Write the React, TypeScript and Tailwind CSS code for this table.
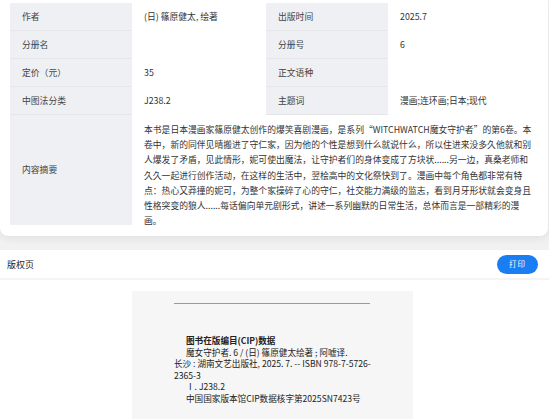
import React from "react";

const rows: [string, string, string, string][] = [
  ["作者", "(日) 篠原健太, 绘著", "出版时间", "2025.7"],
  ["分册名", "", "分册号", "6"],
  ["定价（元）", "35", "正文语种", ""],
  ["中图法分类", "J238.2", "主题词", "漫画;连环画;日本;现代"],
];

const summary = [
  "本书是日本漫画家篠原健太创作的爆笑喜剧漫画，是系列“WITCHWATCH魔女守护者”的第6卷。本",
  "卷中，新的同伴见晴搬进了守仁家，因为他的个性是想到什么就说什么，所以住进来没多久他就和别",
  "人爆发了矛盾，见此情形，妮可使出魔法，让守护者们的身体变成了方块状......另一边，真桑老师和",
  "久久一起进行创作活动，在这样的生活中，翌桧高中的文化祭快到了。漫画中每个角色都非常有特",
  "点：热心又莽撞的妮可，为整个家操碎了心的守仁，社交能力满级的监志，看到月牙形状就会变身且",
  "性格突变的狼人......每话偏向单元剧形式，讲述一系列幽默的日常生活，总体而言是一部精彩的漫",
  "画。",
];

export default function App() {
  return (
    <div className="w-[549px] h-[419px] overflow-hidden bg-[#f1f1f1] font-['Noto_Sans_CJK_SC','Noto_Sans',sans-serif]">
      <div className="w-[548px] bg-white rounded-b-lg shadow-[0_2px_8px_rgba(0,0,0,0.08)] px-[10px] pt-[3px] pb-[11px]">
        <div className="grid grid-cols-[122px_134px_122px_1fr] text-[8.8px]">
          {rows.map((r, i) => (
            <React.Fragment key={i}>
              <div className="h-[28px] flex items-center px-[12px] bg-[#eff0f3] border-b border-[#e4e6ea] text-[#444]">{r[0]}</div>
              <div className="h-[28px] flex items-center px-[12px] bg-white border-b border-white text-[#333]">{r[1]}</div>
              <div className="h-[28px] flex items-center px-[12px] bg-[#eff0f3] border-b border-[#e4e6ea] text-[#444]">{r[2]}</div>
              <div className="h-[28px] flex items-center px-[12px] bg-white border-b border-white text-[#333]">{r[3]}</div>
            </React.Fragment>
          ))}
          <div className="h-[110px] flex items-center px-[12px] bg-[#eff0f3] text-[#444]">内容摘要</div>
          <div className="col-span-3 h-[110px] px-[12px] pt-[7px] text-[#333] text-[8.8px] leading-[15.2px]">
            {summary.map((l, i) => (
              <div key={i} className="whitespace-nowrap">{l}</div>
            ))}
          </div>
        </div>
      </div>
      <div className="mt-[14px] bg-white">
        <div className="h-[30px] flex items-center justify-between pl-[7px] pr-[11px] border-b-2 border-[#f4f4f4]">
          <span className="text-[9px] text-[#222] pt-[2px]">版权页</span>
          <button className="w-[41px] h-[19px] rounded-full bg-[#1a7ef2] text-white text-[7.5px] tracking-[1px] flex items-center justify-center">打印</button>
        </div>
        <div className="pt-[11px] pl-[132px] h-[140px]">
          <div className="w-[281px] h-[130px] bg-[#f6f6f6] pl-[42px] pt-[12px]">
            <div className="w-[196px] border-t border-[#9a9a9a]"></div>
            <div className="mt-[31px] w-[216px] text-[8.6px] leading-[11.5px] text-[#222]">
              <div className="pl-[12px] font-bold">图书在版编目(CIP)数据</div>
              <div className="pl-[12px]">魔女守护者. 6 / (日) 篠原健太绘著 ; 阿嘘译.</div>
              <div>长沙 : 湖南文艺出版社, 2025. 7. -- ISBN 978-7-5726-2365-3</div>
              <div className="pl-[12px]">Ⅰ. J238.2</div>
              <div className="pl-[12px]">中国国家版本馆CIP数据核字第2025SN7423号</div>
            </div>
          </div>
        </div>
      </div>
    </div>
  );
}
